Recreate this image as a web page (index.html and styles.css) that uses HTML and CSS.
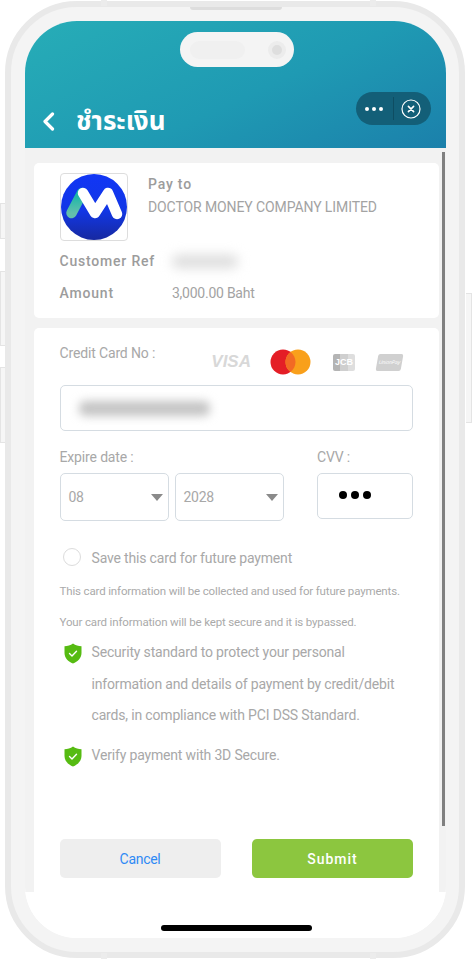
FILE: index.html
```html
<!DOCTYPE html>
<html lang="th">
<head>
    <meta charset="UTF-8">
    <meta name="viewport" content="width=device-width, initial-scale=1.0">
    <title>ชำระเงิน</title>
    <link rel="stylesheet" href="styles.css">
</head>
<body>
    <div class="phone">
        <span class="notch-tab tab-top-left"></span>
        <span class="notch-tab tab-top-right"></span>
        <span class="notch-tab tab-bottom-left"></span>
        <span class="notch-tab tab-bottom-right"></span>
        <span class="speaker"></span>
        <span class="side-btn btn-left-1"></span>
        <span class="side-btn btn-left-2"></span>
        <span class="side-btn btn-left-3"></span>
        <span class="side-btn btn-right"></span>

        <div class="screen">
            <div class="island">
                <span class="island-pill"></span>
                <span class="island-cam"></span>
            </div>

            <div class="header">
                <svg class="back-icon" width="13" height="19" viewBox="0 0 13 19">
                    <path d="M10.5 2 L3 9.5 L10.5 17" fill="none" stroke="#fff" stroke-width="3.2" stroke-linecap="round" stroke-linejoin="round"/>
                </svg>
                <span class="title">ชำระเงิน</span>
                <div class="capsule">
                    <span class="dots"><i></i><i></i><i></i></span>
                    <span class="capsule-line"></span>
                    <svg width="20" height="20" viewBox="0 0 20 20">
                        <circle cx="10" cy="10" r="9" fill="none" stroke="#fff" stroke-width="1.2"/>
                        <path d="M7.4 7.4 L12.6 12.6 M12.6 7.4 L7.4 12.6" stroke="#fff" stroke-width="1.6" stroke-linecap="round"/>
                    </svg>
                </div>
            </div>

            <div class="content">
                <span class="scrollbar"></span>

                <div class="card card-merchant">
                    <div class="merchant-row">
                        <div class="logo-box">
                            <svg width="66" height="66" viewBox="0 0 66 66">
                                <defs>
                                    <linearGradient id="logoBlue" x1="0" y1="0" x2="0" y2="1">
                                        <stop offset="0" stop-color="#1136f5"/>
                                        <stop offset="0.55" stop-color="#1237e6"/>
                                        <stop offset="1" stop-color="#1729a0"/>
                                    </linearGradient>
                                    <linearGradient id="logoTeal" x1="0" y1="0" x2="0" y2="1">
                                        <stop offset="0" stop-color="#12b5a8"/>
                                        <stop offset="1" stop-color="#62c0ac"/>
                                    </linearGradient>
                                </defs>
                                <circle cx="33" cy="33" r="33" fill="url(#logoBlue)"/>
                                <path d="M10.5 39 L21 19" fill="none" stroke="url(#logoTeal)" stroke-width="10.5" stroke-linecap="round"/>
                                <path d="M22 19 L34 39 L47 19 L56 40" fill="none" stroke="#fff" stroke-width="10.5" stroke-linecap="round" stroke-linejoin="round"/>
                            </svg>
                        </div>
                        <div class="merchant-info">
                            <div class="strong-label">Pay to</div>
                            <div class="merchant-name">DOCTOR MONEY COMPANY LIMITED</div>
                        </div>
                    </div>
                    <div class="info-row ref-row">
                        <span class="strong-label info-label">Customer Ref</span>
                        <span class="blur-blob ref-blob"></span>
                    </div>
                    <div class="info-row amount-row">
                        <span class="strong-label info-label">Amount</span>
                        <span class="amount">3,000.00 Baht</span>
                    </div>
                </div>

                <div class="card card-form">
                    <div class="card-top">
                        <span class="field-label card-label">Credit Card No :</span>
                        <div class="brands">
                            <span class="brand-visa">VISA</span>
                            <svg class="brand-mc" width="41" height="26" viewBox="0 0 41 26">
                                <circle cx="13" cy="13" r="12.5" fill="#e41e26"/>
                                <circle cx="28" cy="13" r="12.5" fill="#f9a01b"/>
                                <path d="M20.5 3 a12.5 12.5 0 0 1 0 20 a12.5 12.5 0 0 1 0 -20z" fill="#f26a24"/>
                            </svg>
                            <span class="brand-jcb">JCB</span>
                            <span class="brand-union">UnionPay</span>
                        </div>
                    </div>
                    <div class="input-box card-input">
                        <span class="blur-blob card-blob"></span>
                    </div>

                    <div class="expire-row">
                        <div class="expire-col">
                            <div class="field-label">Expire date :</div>
                            <div class="select-row">
                                <div class="input-box select-box">08<span class="caret"></span></div>
                                <div class="input-box select-box">2028<span class="caret"></span></div>
                            </div>
                        </div>
                        <div class="cvv-col">
                            <div class="field-label">CVV :</div>
                            <div class="input-box cvv-box"><i></i><i></i><i></i></div>
                        </div>
                    </div>

                    <div class="save-row">
                        <span class="radio"></span>
                        <span class="body-text">Save this card for future payment</span>
                    </div>
                    <p class="note first-note">This card information will be collected and used for future payments.</p>
                    <p class="note">Your card information will be kept secure and it is bypassed.</p>

                    <div class="secure-row">
                        <svg class="shield" width="18" height="21" viewBox="0 0 18 21">
                            <path d="M9 0.5 C11.5 2.4 14.5 3.2 17.5 3.2 V10 C17.5 15 13.8 18.6 9 20.5 C4.2 18.6 0.5 15 0.5 10 V3.2 C3.5 3.2 6.5 2.4 9 0.5z" fill="#56bb12"/>
                            <path d="M5.5 10.5 L8 13 L12.5 8.3" fill="none" stroke="#fff" stroke-width="1.4" stroke-linecap="round" stroke-linejoin="round"/>
                        </svg>
                        <span class="body-text secure-text">Security standard to protect your personal<br>information and details of payment by credit/debit<br>cards, in compliance with PCI DSS Standard.</span>
                    </div>
                    <div class="secure-row verify-row">
                        <svg class="shield" width="18" height="21" viewBox="0 0 18 21">
                            <path d="M9 0.5 C11.5 2.4 14.5 3.2 17.5 3.2 V10 C17.5 15 13.8 18.6 9 20.5 C4.2 18.6 0.5 15 0.5 10 V3.2 C3.5 3.2 6.5 2.4 9 0.5z" fill="#56bb12"/>
                            <path d="M5.5 10.5 L8 13 L12.5 8.3" fill="none" stroke="#fff" stroke-width="1.4" stroke-linecap="round" stroke-linejoin="round"/>
                        </svg>
                        <span class="body-text secure-text">Verify payment with 3D Secure.</span>
                    </div>

                    <div class="button-row">
                        <button class="btn btn-cancel">Cancel</button>
                        <button class="btn btn-submit">Submit</button>
                    </div>
                </div>
            </div>

            <div class="foot">
                <span class="home-bar"></span>
            </div>
        </div>
    </div>
</body>
</html>
```

FILE: styles.css
```css
* {
    box-sizing: border-box;
}

body {
    margin: 0;
    padding: 1px 0 0 5px;
    width: 473px;
    height: 960px;
    overflow: hidden;
    background-color: #ffffff;
    font-family: Roboto, 'Liberation Sans', sans-serif;
}

/* phone frame */
.phone {
    position: relative;
    width: 460px;
    height: 957px;
    padding: 14px 13px 14px 14px;
    background-color: #f4f4f4;
    border: 6px solid #e9e9e9;
    border-radius: 72px;
}

.notch-tab {
    position: absolute;
    width: 6px;
    height: 6px;
    background-color: #ececec;
}

.tab-top-left { top: -7px; left: 90px; }
.tab-top-right { top: -7px; left: 359px; }
.tab-bottom-left { bottom: -7px; left: 90px; }
.tab-bottom-right { bottom: -7px; left: 359px; }

.speaker {
    position: absolute;
    top: 0;
    left: 179px;
    width: 92px;
    height: 3px;
    background-color: #dddddd;
    border-radius: 0 0 3px 3px;
}

.side-btn {
    position: absolute;
    width: 5px;
    background-color: #f6f6f6;
    border: 1px solid #e4e4e4;
}

.btn-left-1 { left: -11px; top: 196px; height: 36px; border-right: none; }
.btn-left-2 { left: -11px; top: 264px; height: 75px; border-right: none; }
.btn-left-3 { left: -11px; top: 360px; height: 76px; border-right: none; }
.btn-right { right: -13px; top: 286px; width: 6px; height: 130px; border-left: none; }

.screen {
    position: relative;
    display: flex;
    flex-direction: column;
    height: 100%;
    overflow: hidden;
    background-color: #ffffff;
    border-radius: 52px;
}

.island {
    position: absolute;
    z-index: 2;
    top: 11px;
    left: 155px;
    display: flex;
    align-items: center;
    justify-content: space-between;
    width: 114px;
    height: 35px;
    padding: 0 8px 0 10px;
    background-color: #f4f4f4;
    border-radius: 18px;
}

.island-pill {
    width: 55px;
    height: 18px;
    background-color: #f0f0f0;
    border-radius: 9px;
}

.island-cam {
    width: 18px;
    height: 18px;
    background-color: #dedede;
    border: 4px solid #ececec;
    border-radius: 50%;
}

/* header */
.header {
    position: relative;
    display: flex;
    align-items: center;
    flex-shrink: 0;
    height: 127px;
    padding: 74px 0 0 17px;
    color: #ffffff;
    background: linear-gradient(155deg, #27adb7 0%, #1f9ab3 55%, #1b80ab 100%);
}

.title {
    margin-left: 21px;
    font-family: 'Noto Sans Thai', 'Noto Sans', 'DejaVu Sans', sans-serif;
    font-size: 26px;
    font-weight: 700;
}

.capsule {
    position: absolute;
    top: 71px;
    left: 331px;
    display: flex;
    align-items: center;
    width: 75px;
    height: 33px;
    padding-left: 9px;
    background-color: #135f78;
    border-radius: 17px;
}

.dots {
    display: flex;
    gap: 3px;
}

.dots i {
    width: 4px;
    height: 4px;
    background-color: #ffffff;
    border-radius: 50%;
}

.capsule-line {
    width: 1px;
    height: 23px;
    margin: 0 7px 0 10px;
    background-color: #0e4d62;
}

/* content */
.content {
    position: relative;
    flex-shrink: 0;
    padding: 15px 7px 0 9px;
    background-color: #f2f2f2;
}

.scrollbar {
    position: absolute;
    top: 4px;
    right: 1px;
    width: 3px;
    height: 674px;
    background-color: #808080;
}

.card {
    background-color: #ffffff;
    border-radius: 5px;
}

.card-merchant {
    height: 155px;
    padding: 10px 26px 0 25.5px;
}

.card-form {
    height: 564px;
    margin-top: 10px;
    padding: 0 26px 0 25.5px;
    border-radius: 5px 5px 0 0;
}

.merchant-row {
    display: flex;
}

.logo-box {
    width: 68px;
    height: 68px;
    background-color: #ffffff;
    border: 1px solid #dddddd;
    border-radius: 4px;
    overflow: hidden;
}

.logo-box svg {
    display: block;
}

.merchant-info {
    margin-left: 20.5px;
    padding-top: 3px;
}

.strong-label {
    font-size: 14px;
    font-weight: 500;
    letter-spacing: 0.8px;
    line-height: 16px;
    color: #9c9c9c;
}

.merchant-name {
    margin-top: 7px;
    font-size: 14px;
    letter-spacing: -0.1px;
    line-height: 16px;
    color: #a3a3a3;
}

.info-row {
    display: flex;
    align-items: center;
}

.ref-row {
    height: 20px;
    margin-top: 10px;
}

.amount-row {
    height: 20px;
    margin-top: 12px;
}

.info-label {
    width: 112.5px;
}

.amount {
    font-size: 14px;
    letter-spacing: -0.25px;
    color: #a3a3a3;
}

.blur-blob {
    display: block;
    border-radius: 6px;
}

.ref-blob {
    width: 66px;
    height: 13px;
    background-color: #dcdcdc;
    filter: blur(6px);
}

.card-top {
    display: flex;
    align-items: flex-start;
    justify-content: space-between;
    height: 57px;
}

.field-label {
    font-size: 14px;
    letter-spacing: -0.15px;
    line-height: 16px;
    color: #a8a8a8;
}

.card-label {
    margin-top: 17px;
}

.brands {
    display: flex;
    align-items: center;
    margin: 21px 11px 0 0;
}

.brand-visa {
    margin-right: 19px;
    font-family: 'Liberation Sans', sans-serif;
    font-size: 17px;
    font-weight: 700;
    font-style: italic;
    color: #d8d8d8;
}

.brand-mc {
    margin-right: 22px;
}

.brand-jcb {
    width: 22px;
    height: 17px;
    margin-right: 22px;
    font-family: 'Liberation Sans', sans-serif;
    font-size: 9px;
    font-weight: 700;
    line-height: 17px;
    text-align: center;
    color: #ffffff;
    background: linear-gradient(90deg, #b4b4b4 0 33%, #cfcfcf 33% 66%, #dedede 66% 100%);
    border-radius: 2px;
}

.brand-union {
    width: 25px;
    height: 17px;
    font-family: 'Liberation Sans', sans-serif;
    font-size: 5px;
    font-style: italic;
    line-height: 17px;
    text-align: center;
    color: #ffffff;
    background-color: #d0d0d0;
    border-radius: 2px;
    transform: skewX(-10deg);
}

.input-box {
    background-color: #ffffff;
    border: 1px solid #d5dce2;
    border-radius: 5px;
}

.card-input {
    display: flex;
    align-items: center;
    height: 46px;
    padding-left: 18px;
}

.card-blob {
    width: 131px;
    height: 15px;
    background-color: #c4c4c4;
    filter: blur(5px);
}

.expire-row {
    display: flex;
    margin-top: 18px;
}

.expire-col {
    width: 257.5px;
}

.select-row {
    display: flex;
    gap: 6px;
    margin-top: 8px;
}

.select-box {
    position: relative;
    display: flex;
    align-items: center;
    width: 109px;
    height: 48px;
    padding-left: 8px;
    font-size: 14px;
    letter-spacing: -0.3px;
    color: #a8a8a8;
}

.caret {
    position: absolute;
    top: 20px;
    right: 5px;
    width: 0;
    height: 0;
    border-left: 6.5px solid transparent;
    border-right: 6.5px solid transparent;
    border-top: 7px solid #8a8a8a;
}

.cvv-box {
    display: flex;
    align-items: center;
    gap: 4px;
    width: 96px;
    height: 46px;
    margin-top: 8px;
    padding: 0 0 2px 21px;
}

.cvv-box i {
    width: 8px;
    height: 8px;
    background-color: #000000;
    border-radius: 50%;
}

.save-row {
    display: flex;
    align-items: center;
    gap: 11px;
    height: 20px;
    margin: 27px 0 0 3px;
}

.radio {
    width: 18px;
    height: 18px;
    margin-top: -3px;
    background-color: #ffffff;
    border: 1px solid #dcdcdc;
    border-radius: 50%;
}

.body-text {
    font-size: 14px;
    letter-spacing: -0.17px;
    color: #a8a8a8;
}

.note {
    margin: 13px 0 0;
    font-size: 11.5px;
    letter-spacing: -0.15px;
    line-height: 18px;
    color: #aaaaaa;
}

.first-note {
    margin-top: 14px;
}

.secure-row {
    display: flex;
    align-items: flex-start;
    margin: 6px 0 0 4px;
}

.verify-row {
    margin-top: 8px;
}

.shield {
    flex-shrink: 0;
    margin-top: 6px;
}

.secure-text {
    margin-left: 10px;
    line-height: 31.5px;
}

.button-row {
    display: flex;
    justify-content: space-between;
    margin-top: 68px;
}

.btn {
    width: 161px;
    height: 39px;
    border: none;
    border-radius: 5px;
    font-family: Roboto, 'Liberation Sans', sans-serif;
    font-size: 14px;
}

.btn-cancel {
    letter-spacing: -0.3px;
    color: #2e8af5;
    background-color: #eeeeee;
}

.btn-submit {
    font-weight: 500;
    letter-spacing: 1px;
    color: #ffffff;
    background-color: #8cc63f;
}

.foot {
    position: relative;
    flex: 1;
    background-color: #ffffff;
}

.home-bar {
    position: absolute;
    bottom: 7px;
    left: 136px;
    width: 151px;
    height: 6px;
    background-color: #000000;
    border-radius: 3px;
}
```
